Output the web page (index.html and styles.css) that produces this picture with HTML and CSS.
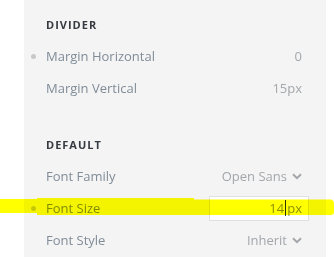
FILE: index.html
```html
<!DOCTYPE html>
<html lang="en">
<head>
  <meta charset="UTF-8">
  <title>Typography Settings</title>
  <link rel="stylesheet" href="styles.css">
</head>
<body>
  <div class="panel">
    <div class="section">
      <div class="heading">DIVIDER</div>
      <div class="row">
        <span class="dot"></span>
        <span class="label">Margin Horizontal</span>
        <span class="value">0</span>
      </div>
      <div class="row">
        <span class="label">Margin Vertical</span>
        <span class="value">15px</span>
      </div>
    </div>

    <div class="section section-gap">
      <div class="heading">DEFAULT</div>
      <div class="row">
        <span class="label">Font Family</span>
        <span class="value">Open Sans
          <svg class="chevron" width="10" height="7" viewBox="0 0 10 7"><path d="M1 1.2 L5 5.2 L9 1.2" fill="none" stroke="#a3a7ab" stroke-width="2"/></svg>
        </span>
      </div>
      <div class="row">
        <span class="dot"></span>
        <span class="label">Font Size</span>
        <div class="field">14<span class="caret"></span>px</div>
      </div>
      <div class="row">
        <span class="label">Font Style</span>
        <span class="value">Inherit
          <svg class="chevron" width="10" height="7" viewBox="0 0 10 7"><path d="M1 1.2 L5 5.2 L9 1.2" fill="none" stroke="#a3a7ab" stroke-width="2"/></svg>
        </span>
      </div>
    </div>
  </div>

  <!-- highlighter stroke over the Font Size row -->
  <svg class="highlight" width="334" height="20" viewBox="0 0 334 20">
    <path d="M0 1 H37 V0 H194 V1.5 H331 Q334 2 334 6 V14 Q334 17 331 17 H37 V15 H0 Z" fill="#ffff00"/>
  </svg>
</body>
</html>
```

FILE: styles.css
```css
body {
  margin: 0;
  background-color: #fff;
  font-family: "Open Sans", Arial, sans-serif;
  width: 334px;
  height: 257px;
  overflow: hidden;
  position: relative;
}

.panel {
  margin-left: 24px;
  width: 302px;
  height: 257px;
  background-color: #f4f4f4;
  padding-top: 8px;
  box-sizing: border-box;
}

.section-gap {
  margin-top: 24px;
}

.heading {
  height: 32px;
  display: flex;
  align-items: center;
  padding-left: 22px;
  font-size: 11px;
  font-weight: 700;
  letter-spacing: 1px;
  color: #353a41;
}

.row {
  position: relative;
  height: 32px;
  display: flex;
  align-items: center;
  justify-content: space-between;
  padding: 0 24px 0 22px;
  font-size: 13px;
}

.dot {
  position: absolute;
  left: 7px;
  top: 14px;
  width: 5px;
  height: 5px;
  border-radius: 50%;
  background-color: #c6c8ca;
}

.label {
  color: #808c98;
}

.value {
  color: #a3a7ab;
  display: flex;
  align-items: center;
}

.chevron {
  margin-left: 5px;
}

.field {
  width: 100px;
  height: 25px;
  margin-right: -7px;
  box-sizing: border-box;
  border: 1px solid #e0e0e0;
  background-color: #fff;
  display: flex;
  align-items: center;
  justify-content: flex-end;
  padding-right: 6px;
  color: #8c9096;
  font-size: 13px;
}

.caret {
  display: inline-block;
  width: 1px;
  height: 16px;
  margin: 0 1px;
  background-color: #333;
}

.highlight {
  position: absolute;
  left: 0;
  top: 198px;
  mix-blend-mode: multiply;
  pointer-events: none;
}
```
